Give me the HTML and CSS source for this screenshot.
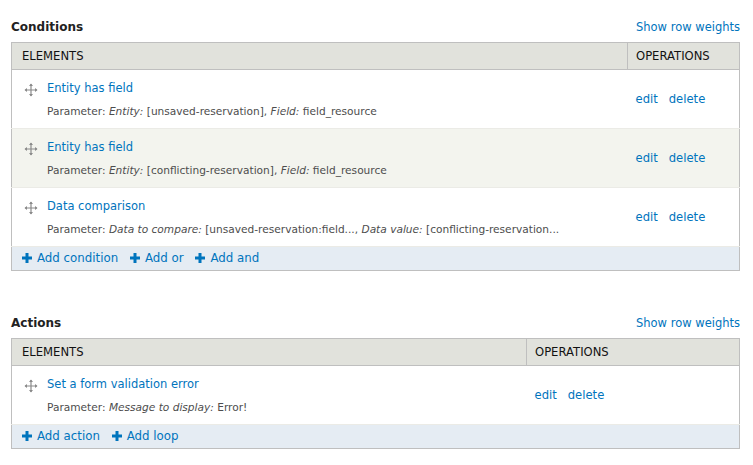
FILE: index.html
```html
<!DOCTYPE html>
<html>
<head>
<meta charset="utf-8">
<link rel="stylesheet" href="styles.css">
</head>
<body>
<div class="page">
  <section class="block block-conditions">
    <div class="block-head">
      <h3 class="block-title">Conditions</h3>
      <a class="weights" href="#">Show row weights</a>
    </div>
    <table class="rules">
      <thead>
        <tr><th class="col-el">ELEMENTS</th><th class="col-op ops-wide">OPERATIONS</th></tr>
      </thead>
      <tbody>
        <tr class="row odd">
          <td class="col-el">
            <div class="el">
              <svg class="handle" viewBox="0 0 14 14" width="14" height="14"><path d="M7 1v12M1 7h12" stroke="#8a8a8a" stroke-width="1.2" fill="none"/><path d="M7 0.5l-2 2.5h4zM7 13.5l-2-2.5h4zM0.5 7l2.5-2v4zM13.5 7l-2.5-2v4z" fill="#8a8a8a"/></svg>
              <div class="el-text">
                <a class="el-link" href="#">Entity has field</a>
                <div class="param">Parameter: <em>Entity:</em> [unsaved-reservation], <em>Field:</em> field_resource</div>
              </div>
            </div>
          </td>
          <td class="col-op"><a href="#">edit</a><a href="#">delete</a></td>
        </tr>
        <tr class="row even">
          <td class="col-el">
            <div class="el">
              <svg class="handle" viewBox="0 0 14 14" width="14" height="14"><path d="M7 1v12M1 7h12" stroke="#8a8a8a" stroke-width="1.2" fill="none"/><path d="M7 0.5l-2 2.5h4zM7 13.5l-2-2.5h4zM0.5 7l2.5-2v4zM13.5 7l-2.5-2v4z" fill="#8a8a8a"/></svg>
              <div class="el-text">
                <a class="el-link" href="#">Entity has field</a>
                <div class="param">Parameter: <em>Entity:</em> [conflicting-reservation], <em>Field:</em> field_resource</div>
              </div>
            </div>
          </td>
          <td class="col-op"><a href="#">edit</a><a href="#">delete</a></td>
        </tr>
        <tr class="row odd">
          <td class="col-el">
            <div class="el">
              <svg class="handle" viewBox="0 0 14 14" width="14" height="14"><path d="M7 1v12M1 7h12" stroke="#8a8a8a" stroke-width="1.2" fill="none"/><path d="M7 0.5l-2 2.5h4zM7 13.5l-2-2.5h4zM0.5 7l2.5-2v4zM13.5 7l-2.5-2v4z" fill="#8a8a8a"/></svg>
              <div class="el-text">
                <a class="el-link" href="#">Data comparison</a>
                <div class="param">Parameter: <em>Data to compare:</em> [unsaved-reservation:field..., <em>Data value:</em> [conflicting-reservation...</div>
              </div>
            </div>
          </td>
          <td class="col-op"><a href="#">edit</a><a href="#">delete</a></td>
        </tr>
        <tr class="add-row">
          <td colspan="2">
            <a class="add" href="#"><svg class="plus" viewBox="0 0 10 10" width="10" height="10"><path d="M5 0v10M0 5h10" stroke="#0074bd" stroke-width="3"/></svg>Add condition</a>
            <a class="add" href="#"><svg class="plus" viewBox="0 0 10 10" width="10" height="10"><path d="M5 0v10M0 5h10" stroke="#0074bd" stroke-width="3"/></svg>Add or</a>
            <a class="add" href="#"><svg class="plus" viewBox="0 0 10 10" width="10" height="10"><path d="M5 0v10M0 5h10" stroke="#0074bd" stroke-width="3"/></svg>Add and</a>
          </td>
        </tr>
      </tbody>
    </table>
  </section>

  <section class="block block-actions">
    <div class="block-head">
      <h3 class="block-title">Actions</h3>
      <a class="weights" href="#">Show row weights</a>
    </div>
    <table class="rules">
      <thead>
        <tr><th class="col-el">ELEMENTS</th><th class="col-op ops-narrow">OPERATIONS</th></tr>
      </thead>
      <tbody>
        <tr class="row odd">
          <td class="col-el">
            <div class="el">
              <svg class="handle" viewBox="0 0 14 14" width="14" height="14"><path d="M7 1v12M1 7h12" stroke="#8a8a8a" stroke-width="1.2" fill="none"/><path d="M7 0.5l-2 2.5h4zM7 13.5l-2-2.5h4zM0.5 7l2.5-2v4zM13.5 7l-2.5-2v4z" fill="#8a8a8a"/></svg>
              <div class="el-text">
                <a class="el-link" href="#">Set a form validation error</a>
                <div class="param">Parameter: <em>Message to display:</em> Error!</div>
              </div>
            </div>
          </td>
          <td class="col-op"><a href="#">edit</a><a href="#">delete</a></td>
        </tr>
        <tr class="add-row">
          <td colspan="2">
            <a class="add" href="#"><svg class="plus" viewBox="0 0 10 10" width="10" height="10"><path d="M5 0v10M0 5h10" stroke="#0074bd" stroke-width="3"/></svg>Add action</a>
            <a class="add" href="#"><svg class="plus" viewBox="0 0 10 10" width="10" height="10"><path d="M5 0v10M0 5h10" stroke="#0074bd" stroke-width="3"/></svg>Add loop</a>
          </td>
        </tr>
      </tbody>
    </table>
  </section>
</div>
</body>
</html>
```

FILE: styles.css
```css
html, body {
  margin: 0;
  padding: 0;
  background: #fff;
}
body {
  font-family: "DejaVu Sans", Verdana, sans-serif;
  font-size: 12px;
  color: #333;
}
a {
  color: #0074bd;
  text-decoration: none;
}
.page {
  padding: 14px 13px 0 11px;
}
.block-conditions {
  margin-bottom: 39px;
}
.block-head {
  display: flex;
  justify-content: space-between;
  align-items: center;
  height: 25px;
  padding-bottom: 3px;
}
.block-title {
  margin: 0;
  font-size: 12px;
  font-weight: bold;
  color: #222;
}
.weights {
  font-size: 11.5px;
}
.rules {
  width: 100%;
  border-collapse: collapse;
  border: 1px solid #bfbfbf;
  table-layout: fixed;
}
.rules th {
  background: #e1e2dc;
  text-align: left;
  font-weight: normal;
  font-size: 11.6px;
  color: #111;
  height: 26px;
  padding: 0 10px;
  border-bottom: 1px solid #bfbfbf;
}
.rules th + th {
  border-left: 1px solid #bfbfbf;
}
.ops-wide { width: 95px; }
.ops-narrow { width: 196px; }
.row td {
  height: 58px;
  padding: 0;
  border-bottom: 1px solid #ebebe6;
}
.row.even td {
  background: #f3f4ee;
}
.el {
  display: flex;
  align-items: flex-start;
  padding: 0 0 0 12px;
}
.handle {
  margin-top: 3px;
  margin-right: 9px;
  flex: none;
}
.el-link {
  display: block;
  font-size: 11.5px;
  line-height: 16px;
}
.param {
  margin-top: 8px;
  font-size: 10.6px;
  line-height: 14px;
  color: #4d4d4d;
  white-space: nowrap;
}
.col-op {
  padding: 0 8px !important;
  white-space: nowrap;
  font-size: 11.6px;
}
.col-op a {
  margin-right: 11px;
}
.add-row td {
  background: #e5ecf3;
  height: 23px;
  padding: 0 0 0 10px;
}
.add {
  display: inline-flex;
  align-items: center;
  margin-right: 8px;
  font-size: 11.8px;
}
.plus {
  margin-right: 5px;
}
```
